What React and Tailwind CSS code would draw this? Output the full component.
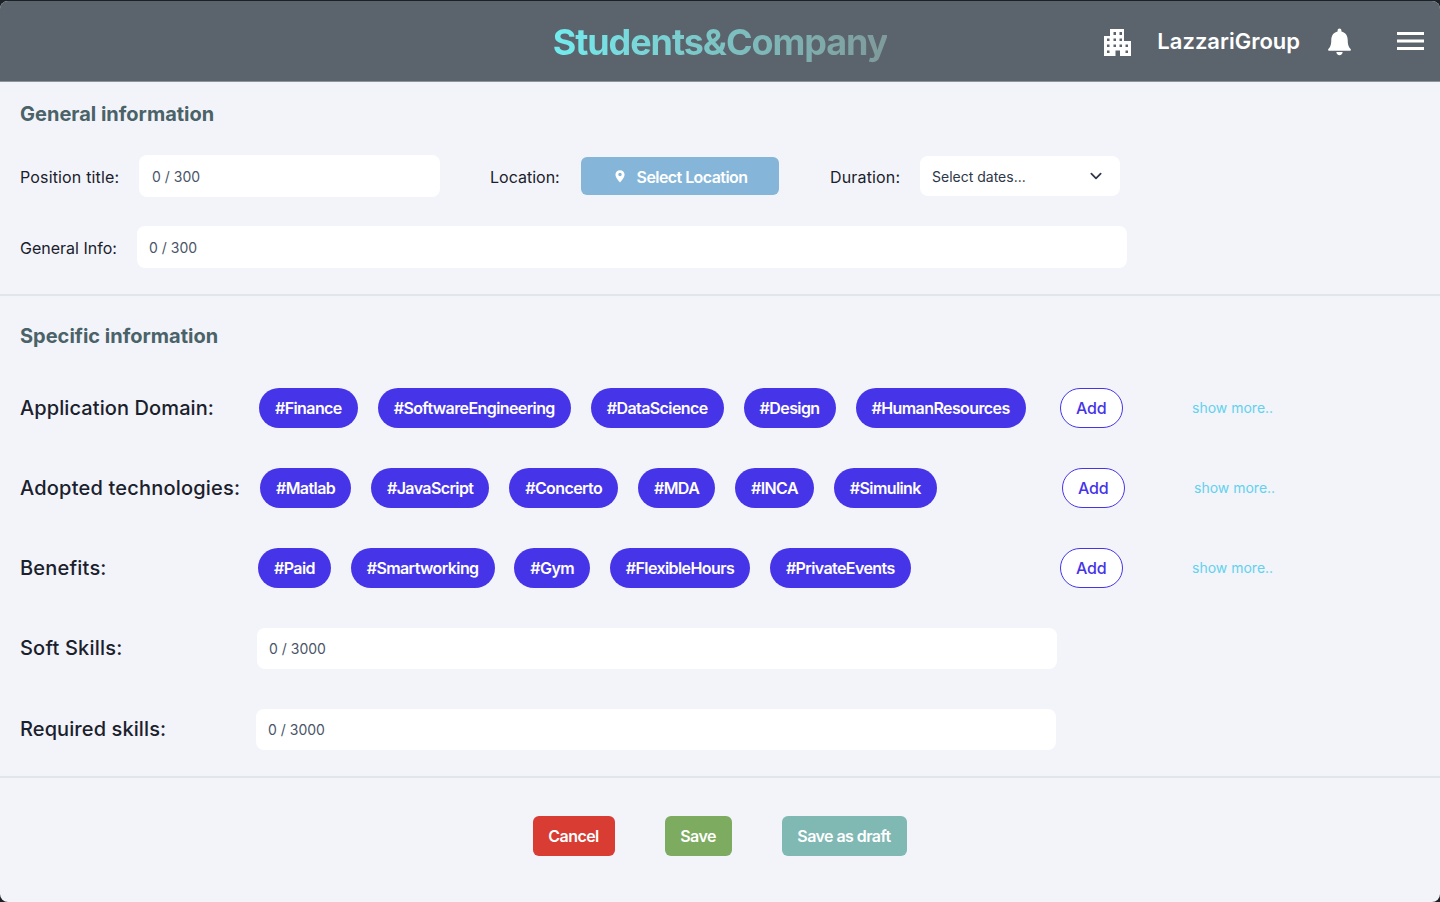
const inter = { fontFamily: '"Inter", sans-serif' };

function Pill({ children }) {
  return (
    <span className="h-10 px-4 flex items-center rounded-full bg-[#4634e8] text-white text-base font-semibold tracking-[-0.037em] whitespace-nowrap">
      {children}
    </span>
  );
}

function TagRow({ label, labelW, labelT, tagsW, gap = "gap-5", tags }) {
  return (
    <div className="flex items-center h-10">
      <div className={`${labelW} ${labelT} shrink-0 text-[20px] font-medium text-[#1a202c] pl-5`}>{label}</div>
      <div className={`${tagsW} ${gap} shrink-0 flex items-center`}>
        {tags.map((t) => (
          <Pill key={t}>{t}</Pill>
        ))}
      </div>
      <button className="w-[62.5px] h-10 shrink-0 rounded-full border border-[#4634e8] text-[#4634e8] bg-white text-base font-medium tracking-[-0.01em]">Add</button>
      <a className="ml-[69.5px] text-sm text-[#63d1ee]">show more..</a>
    </div>
  );
}

function Field({ w, h = "h-[41px]", text }) {
  return (
    <div className={`${w} ${h} bg-white rounded-lg flex items-center px-3 text-sm tracking-normal text-[#4a5568]`}>{text}</div>
  );
}

export default function App() {
  return (
    <div className="w-[1440px] h-[902px] bg-[#1c2126] overflow-hidden pt-px" style={inter}>
      <div className="h-[901px] rounded-lg overflow-hidden bg-[#f2f4f9] flex flex-col">
        <header className="h-[81px] shrink-0 bg-[#5b646c] border-b border-[#8d949a] flex items-center relative">
          <div className="flex-1 flex justify-center mt-[2px]">
            <span className="text-[36px] font-bold tracking-[-0.03em] bg-gradient-to-r from-[#72ecef] to-[#7f9a9a] bg-clip-text text-transparent">Students&amp;Company</span>
          </div>
          <div className="absolute right-[16px] top-0 h-[80px] flex items-center text-white">
            <svg width="27" height="27" viewBox="0 0 27 27" fill="#fff" className="mt-[3px]">
              <path fillRule="evenodd" d="M6 0h14v12h7v15H0V7h6V0zM9.500 3v3H12V3H9.500zm6 0v3H18V3h-2.500zM3 9.500v2.500h2.500V9.500H3zm6.500 0v2.500H12V9.500H9.500zm6 0v2.500H18V9.500h-2.500zM3 15.500V18h2.500v-2.500H3zm6.500 0V18H12v-2.500H9.500zm6 0V18H18v-2.500h-2.500zm6 0V18H24v-2.500h-2.500zM3 21.500V24h2.500v-2.500H3zm18.500 0V24H24v-2.500h-2.500zM11.500 21.500V27H16v-5.500h-4.500z" />
            </svg>
            <span className="ml-[26px] text-[22px] font-semibold">LazzariGroup</span>
            <svg width="23" height="29" viewBox="0 0 24 30" fill="#fff" className="ml-[28px] mt-[3px]">
              <path d="M12 0.500c1.200 0 2 .9 2 2v1c4.400 1 6.600 4.600 6.600 9 0 5 1 7.300 3 9.300.6.6.2 1.700-.7 1.700H1.100c-.9 0-1.300-1.100-.7-1.700 2-2 3-4.300 3-9.300 0-4.400 2.200-8 6.600-9v-1c0-1.100.8-2 2-2zM8.700 25h6.600c0 1.900-1.500 3.300-3.300 3.300S8.700 26.900 8.700 25z" />
            </svg>
            <svg width="27" height="18" viewBox="0 0 27 18" fill="#fff" className="ml-[46px]">
              <rect y="0" width="27" height="3" />
              <rect y="7.500" width="27" height="3" />
              <rect y="15" width="27" height="3" />
            </svg>
          </div>
        </header>

        <section className="h-[214px] shrink-0 border-b-2 border-[#e2e5ea] pl-5 flex flex-col">
          <h2 className="mt-[18px] text-[20px] leading-7 font-bold text-[#4a6268]">General information</h2>
          <div className="mt-[27px] flex items-center h-[42px] text-base text-[#1a202c]">
            <span className="w-[119px] pt-0.5 tracking-[0.01em]">Position title:</span>
            <Field w="w-[301px] pt-0.5 !pl-[13px]" h="h-[42px]" text="0 / 300" />
            <span className="ml-[50px] w-[91px] pt-0.5">Location:</span>
            <button className="w-[198px] h-[38px] pl-0.5 rounded-md bg-[#85b6d9] text-white font-semibold tracking-[-0.035em] flex items-center justify-center gap-3">
              <svg width="10" height="13" viewBox="0 0 11 14" fill="#fff">
                <path fillRule="evenodd" d="M5.500 0C2.500 0 .5 2.200.5 4.900c0 3.400 3.500 7.100 5 8.800 1.500-1.700 5-5.400 5-8.800C10.500 2.200 8.500 0 5.500 0zm0 6.800a1.900 1.900 0 110-3.800 1.900 1.900 0 010 3.800z" />
              </svg>
              <span className="pt-0.5">Select Location</span>
            </button>
            <span className="ml-[51px] w-[90px] pt-0.5 tracking-[0.01em]">Duration:</span>
            <div className="w-[200px] h-10 bg-white rounded-lg flex items-center justify-between pl-3 pr-[17px] pt-0.5 text-sm text-[#2d3748]">
              Select dates...
              <svg width="14" height="14" viewBox="0 0 24 24" fill="none" stroke="#2d3748" strokeWidth="3" strokeLinecap="round" strokeLinejoin="round" className="-mt-0.5">
                <path d="M4 8l8 8 8-8" />
              </svg>
            </div>
          </div>
          <div className="mt-[29px] flex items-center h-[42px] text-base text-[#1a202c]">
            <span className="w-[117px] pt-0.5">General Info:</span>
            <Field w="w-[990px] pt-0.5" h="h-[42px]" text="0 / 300" />
          </div>
        </section>

        <section className="h-[482px] shrink-0 border-b-2 border-[#e2e5ea] flex flex-col">
          <h2 className="mt-[26px] pl-5 text-[20px] leading-7 font-bold text-[#4a6268]">Specific information</h2>
          <div className="mt-[38px] flex flex-col gap-10">
            <TagRow label="Application Domain:" labelW="w-[259px]" labelT="tracking-[0.005em]" tagsW="w-[801px]" tags={["#Finance", "#SoftwareEngineering", "#DataScience", "#Design", "#HumanResources"]} />
            <TagRow label="Adopted technologies:" labelW="w-[260px]" labelT="tracking-[0.01em]" tagsW="w-[802px]" gap="gap-[19.8px]" tags={["#Matlab", "#JavaScript", "#Concerto", "#MDA", "#INCA", "#Simulink"]} />
            <TagRow label="Benefits:" labelW="w-[258px]" labelT="tracking-[0.01em]" tagsW="w-[802px]" gap="gap-[19.8px]" tags={["#Paid", "#Smartworking", "#Gym", "#FlexibleHours", "#PrivateEvents"]} />
          </div>
          <div className="mt-10 flex items-center h-[41px] pl-5">
            <span className="w-[237px] pb-0.5 text-[20px] font-medium tracking-[0.01em] text-[#1a202c]">Soft Skills:</span>
            <Field w="w-[800px]" text="0 / 3000" />
          </div>
          <div className="mt-10 flex items-center h-[41px] pl-5">
            <span className="w-[236px] pb-0.5 text-[20px] font-medium tracking-[0.005em] text-[#1a202c]">Required skills:</span>
            <Field w="w-[800px]" text="0 / 3000" />
          </div>
        </section>

        <footer className="flex-1 flex justify-center items-start pt-[38px] pr-px">
          <button className="w-[82px] h-10 rounded-md bg-[#d93c32] text-white text-base font-semibold tracking-[-0.035em]">Cancel</button>
          <button className="ml-[50px] w-[67px] h-10 rounded-md bg-[#7dab5f] text-white text-base font-semibold tracking-[-0.035em]">Save</button>
          <button className="ml-[50px] w-[125px] h-10 rounded-md bg-[#80b8b4] text-white text-base font-semibold tracking-[-0.035em]">Save as draft</button>
        </footer>
      </div>
    </div>
  );
}
